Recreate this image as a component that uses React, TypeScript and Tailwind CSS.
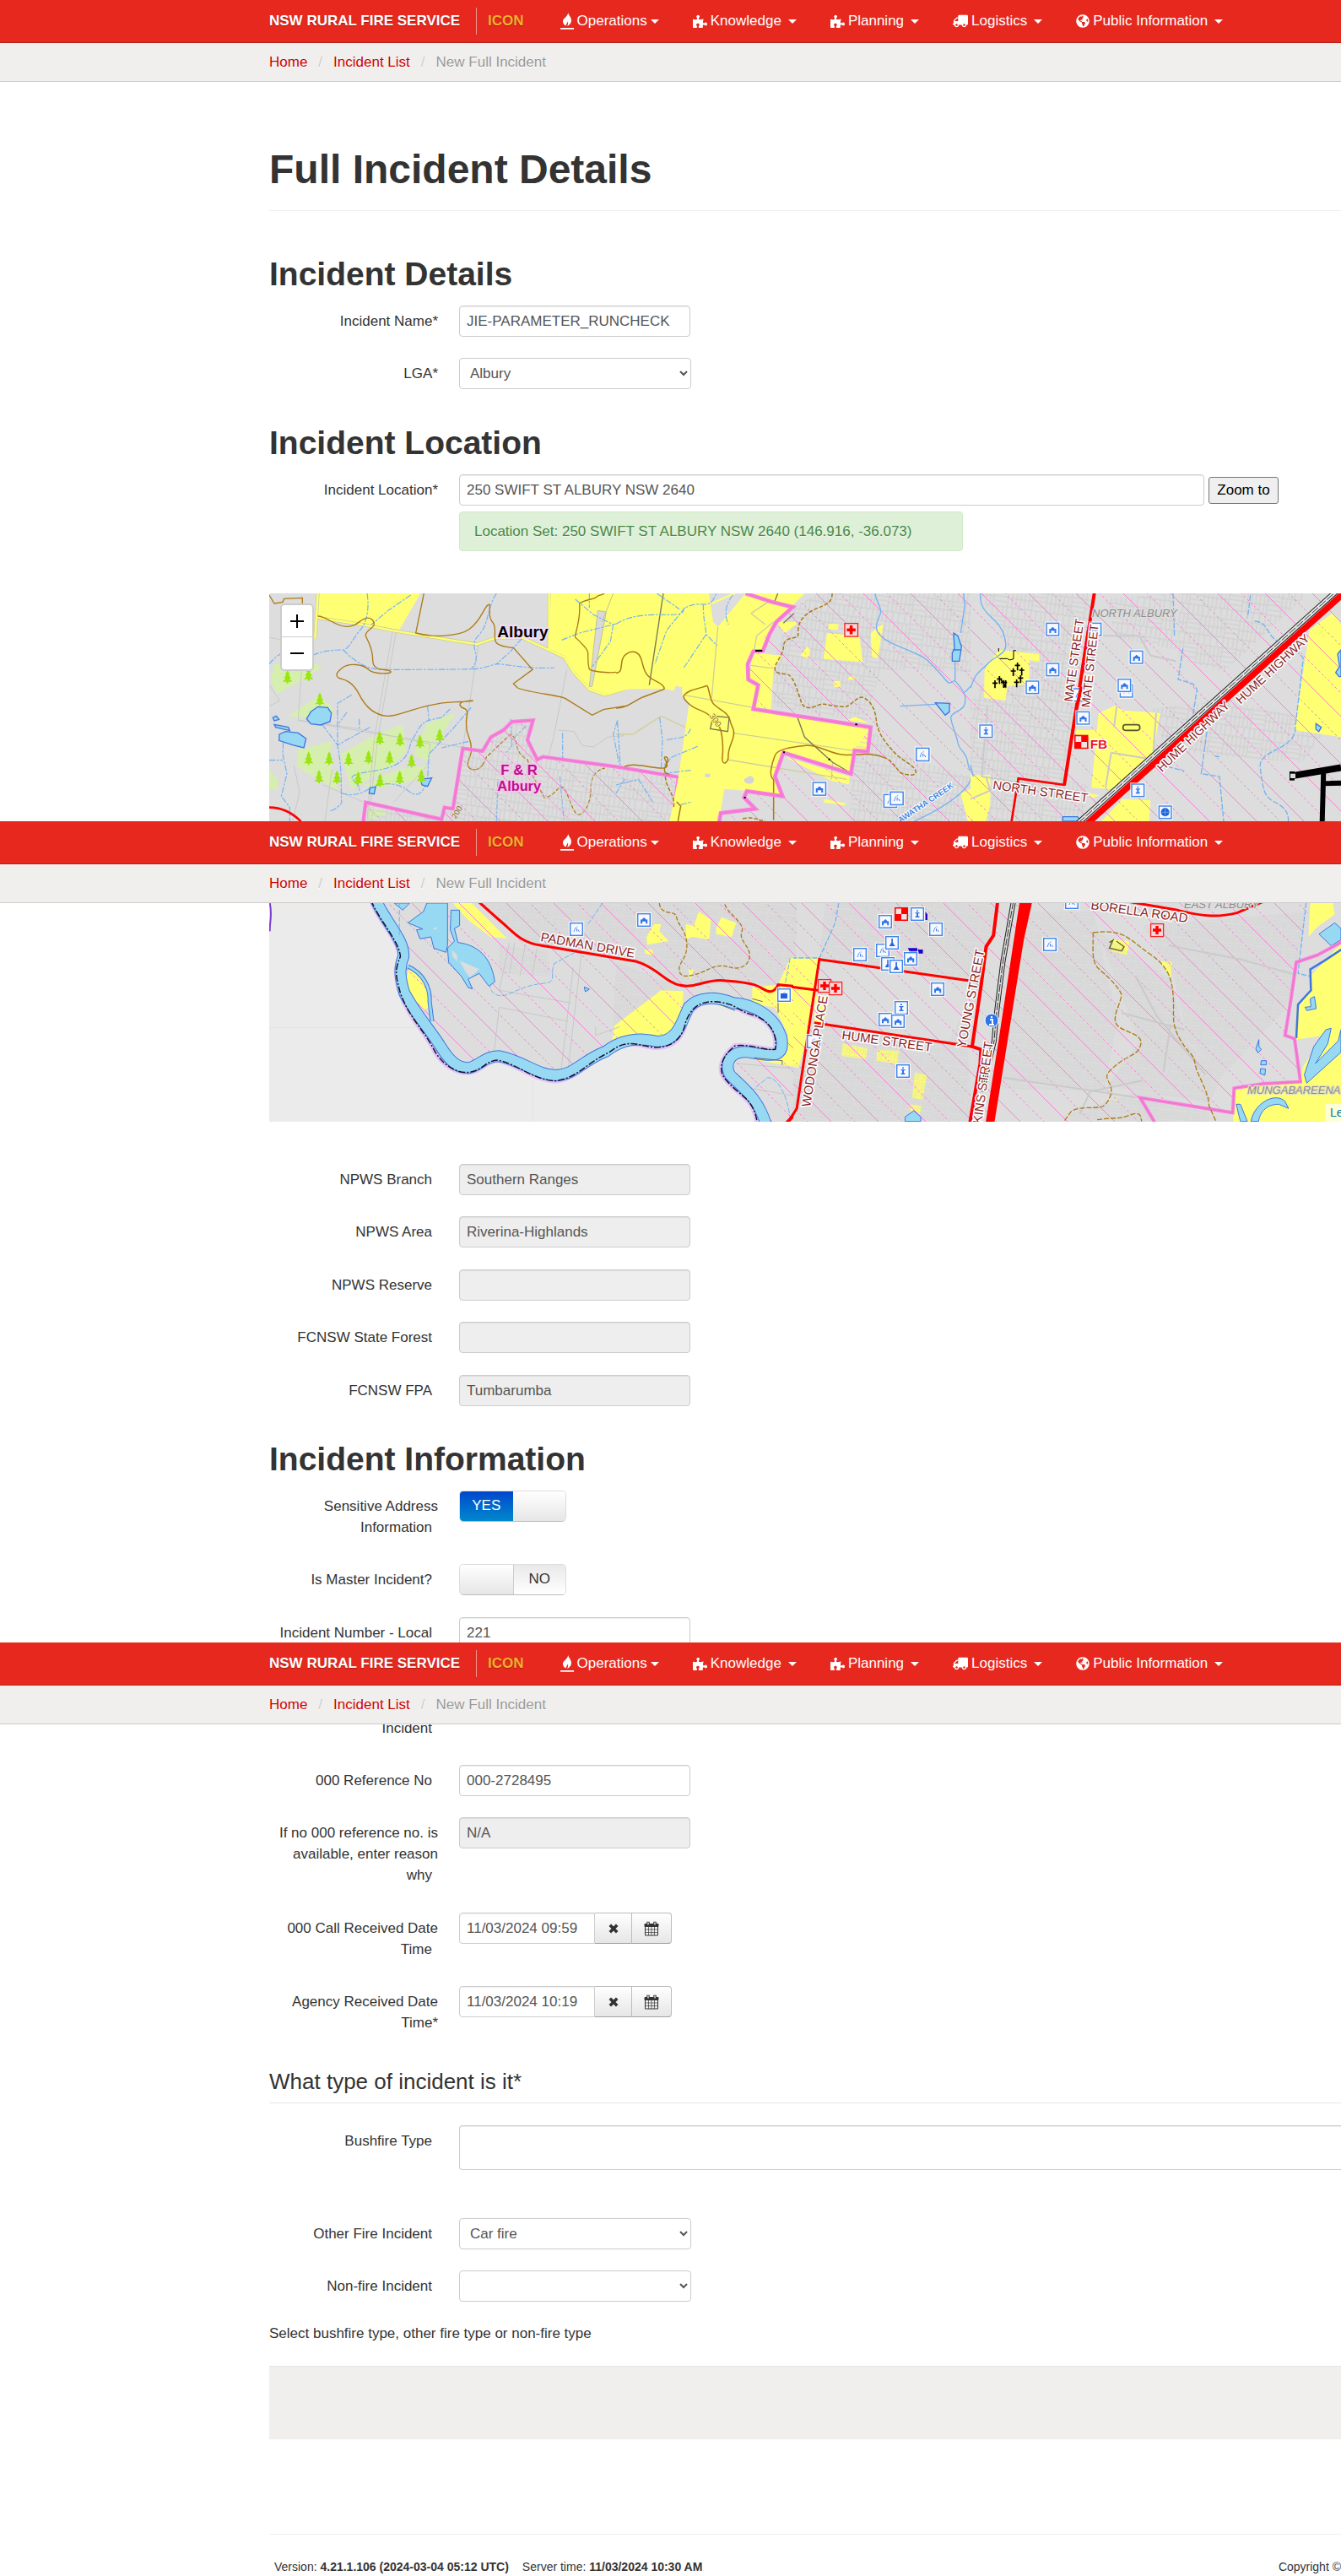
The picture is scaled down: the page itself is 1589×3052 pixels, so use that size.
import type { ReactNode } from "react";
import { FaGlobeAmericas, FaPuzzlePiece, FaTruck } from "react-icons/fa";

/* ---------- Icons ---------- */

function FlameIcon() {
  return (
    <svg viewBox="0 0 16 20" className="h-5 w-4" fill="currentColor" aria-hidden="true">
      <path d="M9.200 0C9.600 3 13 5 13 9.300c0 3.300-2 5.400-4.800 6.700.3-1.400 1.700-3.200.6-5.400-.4 1.500-1.900 2.500-2.300 5C4.500 14.600 3 12.800 3 10.200 3 6.500 8.600 5.200 9.200 0zM0 18h16v1.700H0z" />
    </svg>
  );
}

function CrossIcon() {
  return (
    <svg viewBox="0 0 12 12" className="h-3 w-3" aria-hidden="true">
      <path d="M1.800 1.800l8.400 8.400M10.200 1.800l-8.400 8.400" stroke="#333" strokeWidth="3.600" />
    </svg>
  );
}

function CalendarIcon() {
  return (
    <svg viewBox="0 0 18 18" className="h-[18px] w-[18px]" fill="none" stroke="#333" aria-hidden="true">
      <path d="M1 3.500h16v3H1z" fill="#333" />
      <path d="M1.500 3.500h15v13.500h-15z" />
      <path d="M1.500 10h15M1.500 13.500h15M5.500 6.500V17M9 6.500V17M12.500 6.500V17" strokeWidth="0.700" />
      <path d="M5 .8v4.200M13 .8v4.200" strokeWidth="3.400" />
      <path d="M5 1.500v3M13 1.500v3" stroke="#fff" strokeWidth="1.200" />
    </svg>
  );
}

/* ---------- Header ---------- */

const NAV: { label: string; icon: ReactNode; tight?: boolean }[] = [
  { label: "Operations", icon: <FlameIcon />, tight: true },
  { label: "Knowledge", icon: <FaPuzzlePiece size={17} /> },
  { label: "Planning", icon: <FaPuzzlePiece size={17} /> },
  { label: "Logistics", icon: <FaTruck size={18} className="-scale-x-100" /> },
  { label: "Public Information", icon: <FaGlobeAmericas size={16} /> },
];

function Header() {
  return (
    <header>
      <nav className="flex h-[51px] items-center border-b border-[#b02018] bg-[#e6281e] pl-[319px] text-[17px] whitespace-nowrap text-white [text-shadow:0_1px_1px_rgba(0,0,0,0.3)]">
        <a href="#home" className="font-bold">NSW RURAL FIRE SERVICE</a>
        <span className="mr-[13px] ml-[19px] h-8 w-px bg-[#f2938e]" />
        <a href="#icon" className="font-bold text-[#f6ae2d]">ICON</a>
        <ul className="ml-[43px] flex gap-[40px]">
          {NAV.map((n) => (
            <li key={n.label}>
              <button type="button" className="flex items-center gap-1">
                {n.icon}
                <span>{n.label}</span>
                <span
                  className={
                    (n.tight ? "" : "ml-[4px] ") +
                    "border-x-[5px] border-t-[5px] border-x-transparent border-t-white"
                  }
                />
              </button>
            </li>
          ))}
        </ul>
      </nav>
      <ol className="flex h-[46px] items-start border-b border-[#ccc] bg-[#f0efed] pt-[10px] pl-[319px] text-[17px] leading-[25px] [text-shadow:0_1px_0_#fff]">
        <li><a href="#home" className="text-[#c00]">Home</a></li>
        <li className="px-[13px] text-[#ccc]">/</li>
        <li><a href="#incidents" className="text-[#c00]">Incident List</a></li>
        <li className="px-[13px] text-[#ccc]">/</li>
        <li className="text-[#999]">New Full Incident</li>
      </ol>
    </header>
  );
}

/* ---------- Form parts ---------- */

const FIELD =
  "block h-[37px] rounded-[4px] border border-[#ccc] px-[8px] text-[17px] text-[#555] shadow-[inset_0_1px_1px_rgba(0,0,0,0.075)]";

function Row({ id, label, children }: { id: string; label: string; children: ReactNode }) {
  return (
    <div className="mb-[25px] grid grid-cols-[200px_minmax(0,1fr)] gap-[25px] last:mb-0 even:mb-[26px] even:last:mb-0">
      <label htmlFor={id} className="py-[6px] text-right text-[17px] leading-[25px] text-[#333]">
        {label}
        {!label.endsWith("*") && <span className="inline-block w-[7px]" />}
      </label>
      <div>{children}</div>
    </div>
  );
}

function TextField({ id, label, value, disabled }: { id: string; label: string; value: string; disabled?: boolean }) {
  return (
    <Row id={id} label={label}>
      <input
        id={id}
        defaultValue={value}
        disabled={disabled}
        className={FIELD + " w-[274px] bg-white disabled:bg-[#eee]"}
      />
    </Row>
  );
}

function SelectField({ id, label, value }: { id: string; label: string; value: string }) {
  return (
    <Row id={id} label={label}>
      <select
        id={id}
        defaultValue={value}
        className="block h-[37px] w-[275px] rounded-[4px] border border-[#ccc] bg-white px-2 text-[17px] text-[#555]"
      >
        <option>{value}</option>
      </select>
    </Row>
  );
}

function SwitchField({ id, label, on }: { id: string; label: string; on: boolean }) {
  return (
    <Row id={id} label={label}>
      <button
        id={id}
        type="button"
        role="switch"
        aria-checked={on}
        className="flex h-[37px] w-[127px] overflow-hidden rounded-[5px] border border-[#ddd] border-b-[#bbb] text-[17px] leading-[34px]"
      >
        {on ? (
          <>
            <span className="h-full w-1/2 bg-linear-to-b from-[#04c] to-[#08c] text-white">YES</span>
            <span className="h-full w-1/2 bg-linear-to-b from-white to-[#e6e6e6]" />
          </>
        ) : (
          <>
            <span className="h-full w-1/2 bg-linear-to-b from-white to-[#e6e6e6]" />
            <span className="h-full w-1/2 border-l border-[#ccc] bg-linear-to-b from-[#e9e9e9] to-white text-[#333]">NO</span>
          </>
        )}
      </button>
    </Row>
  );
}

function DateField({ id, label, value }: { id: string; label: string; value: string }) {
  const btn =
    "flex h-[37px] items-center justify-center border border-l-0 border-[#bbb] border-b-[#a2a2a2] bg-linear-to-b from-white to-[#e6e6e6]";
  return (
    <Row id={id} label={label}>
      <div className="flex">
        <input
          id={id}
          defaultValue={value}
          className="h-[37px] w-[161px] rounded-l-[4px] border border-[#ccc] px-2 text-[17px] text-[#555] shadow-[inset_0_1px_1px_rgba(0,0,0,0.075)]"
        />
        <button type="button" aria-label="Clear" className={btn + " w-[44px]"}><CrossIcon /></button>
        <button type="button" aria-label="Pick date" className={btn + " w-[47px] rounded-r-[4px]"}><CalendarIcon /></button>
      </div>
    </Row>
  );
}

function Heading({ children }: { children: ReactNode }) {
  return <h2 className="mb-3 text-[39px] leading-[50px] font-bold text-[#333]">{children}</h2>;
}

/* ---------- Map ---------- */

const YELLOW = "#ffff73";
const PINK = "#fb7fdc";

function Patterns({ id, k }: { id: string; k: number }) {
  return (
    <defs>
      <pattern id={id + "-hatch"} width="56" height="56" patternUnits="userSpaceOnUse" patternTransform={`scale(${k})`}>
        <path d="M-1-1l58 58" stroke="#f680d6" strokeWidth="1" fill="none" />
        <path d="M27-1l30 30M-1 27l30 30" stroke="#f680d6" strokeWidth="1" strokeDasharray="3 3" fill="none" />
      </pattern>
      <pattern id={id + "-lots"} width="46" height="34" patternUnits="userSpaceOnUse" patternTransform={`rotate(8) scale(${k})`}>
        <path
          d="M0 1h46M0 12h30M30 23h16M0 23h30M1 0v34M30 1v33M6 1v22M11 1v22M16 1v22M21 1v22M26 1v22M30 6h16M30 11h16M30 17h16M36 23v11M42 23v11M8 23v11M15 23v11M23 23v11"
          stroke="#cbcbcb"
          strokeWidth="0.900"
          fill="none"
        />
      </pattern>
    </defs>
  );
}

type Kind = "school" | "person" | "plain" | "tower";

function Facility({ x, y, kind, s = 1 }: { x: number; y: number; kind: Kind; s?: number }) {
  const glyph: Record<Kind, ReactNode> = {
    school: <path d="M4 12.300V7.500h1.500l2.600-2.500 2.600 2.500h1.500v4.800h-2V9.700H6v2.600z" fill="#2f74e8" />,
    person: <path d="M7 3.500h2V5H7zM5.500 6h5v1.200H9v3.300h1.500V12h-5v-1.500H7V7.200H5.500z" fill="#2f74e8" />,
    plain: <path d="M5 11c1.500-4 2-5 2.600-5.500M8.500 7v3.500M10 8.500l1.500 2.500M9 4.500v1" stroke="#2f74e8" fill="none" strokeWidth="0.900" />,
    tower: <path d="M7.300 3h1.600v5.500h1v2h1.500V12H5v-1.500h1.300v-2h1z" fill="#1f62dc" />,
  };
  return (
    <g transform={`translate(${x} ${y}) scale(${s})`}>
      <rect x="-1.200" y="-1.200" width="18.400" height="18.400" fill="#fff" opacity="0.700" />
      <rect x="0.700" y="0.700" width="14.600" height="14.600" fill="#f7f9ff" stroke="#3f85ea" strokeWidth="1.400" />
      {glyph[kind]}
    </g>
  );
}

function Hospital({ x, y, s = 1 }: { x: number; y: number; s?: number }) {
  return (
    <g transform={`translate(${x} ${y}) scale(${s})`}>
      <rect x="0.600" y="0.600" width="15" height="15" fill="#f0dcdc" stroke="#f22" strokeWidth="1.300" />
      <path d="M6.300 3h3.400v3.300H13v3.400H9.700V13H6.300V9.700H3V6.300h3.300z" fill="#f00" />
    </g>
  );
}

function Station({ x, y, s = 1 }: { x: number; y: number; s?: number }) {
  return (
    <g transform={`translate(${x} ${y}) scale(${s})`}>
      <rect width="16" height="16" fill="#f00" />
      <path d="M1.500 1.500H8V8H1.500zM8 8h6.500v6.500H8z" fill="#f3e4e4" />
    </g>
  );
}

function Label({
  x, y, size, angle = 0, fill = "#8b1f1f", halo = "#fff", bold, italic, children,
}: {
  x: number; y: number; size: number; angle?: number; fill?: string; halo?: string;
  bold?: boolean; italic?: boolean; children: string;
}) {
  return (
    <text
      transform={`translate(${x} ${y}) rotate(${angle})`}
      fontSize={size}
      fill={fill}
      stroke={halo}
      strokeWidth={size / 5}
      strokeLinejoin="round"
      paintOrder="stroke"
      fontWeight={bold ? 700 : 400}
      fontStyle={italic ? "italic" : "normal"}
    >
      {children}
    </text>
  );
}

const TREES: [number, number][] = [
  [92, 335], [207, 415], [167, 625], [309, 627], [455, 622], [420, 552], [492, 557],
  [343, 695], [421, 703], [491, 693], [204, 690], [380, 620], [240, 625], [167, 326],
  [633, 543], [563, 565], [533, 634], [268, 692], [568, 688],
];

function MapNorth() {
  const boundary1 =
    "M360 860L370 782 640 842 650 800 680 805 715 590 785 600 815 550 860 525 890 495 965 490 945 560 980 630 1000 620 1260 655 1482 692 1458 860";
  const boundary2 =
    "M460 39L555 70 628 88 570 140 545 185 522 243 488 245 468 290 470 345 505 365 488 450 905 515 895 602 848 597 835 680 595 605 565 690 592 760 465 742 455 765 495 805 372 820 365 860";
  return (
    <svg
      viewBox="0 0 3810 810"
      preserveAspectRatio="xMinYMin slice"
      className="block h-[270px] w-full bg-[#ddd] font-['Liberation_Sans',Arial,sans-serif]"
      fill="none"
      role="img"
      aria-label="Map of Albury, northern part"
    >
      <Patterns id="north" k={3} />
      <g transform="translate(-27 -39)">
        <path d="M205 39H565L490 168 200 125z" fill={YELLOW} />
        <path d="M45 290L180 285 215 300 150 345 55 395 32 350zM95 475L200 405 250 440 255 470 160 482zM130 595L250 565 240 620 270 740 125 655zM280 610L400 545 500 505 515 600 470 650 320 735zM365 720L480 665 590 650 560 700 400 735zM540 610L590 500 690 465 620 570 590 640zM27 665L55 700V735H27zM375 800L455 820 380 845z" fill="#d7efae" />
        <g stroke="#c9c9c9" strokeWidth="3">
          <path d="M150 200L130 490 390 535 740 590M465 175L400 560 375 840M478 175L412 560 388 780M770 225L715 590M1085 310L1040 540 1020 620M115 650L135 745 110 849M250 665L225 849M130 490L340 520 600 575 590 650 470 780M220 720L360 780M1055 525L1110 530 1140 580 1180 585 1230 550 1290 545M27 195L70 205M27 365L65 420 27 440" />
        </g>
        <path d="M200 39L190 200M1022 39V240M195 125L360 150 470 172 765 220 830 198 930 198 1020 240 1075 265 1110 320 1165 380 1220 400 1290 380" stroke="#cfcf9a" strokeWidth="12" />
        <path d="M200 39L190 200M1022 39V240M195 125L360 150 470 172 765 220 830 198 930 198 1020 240 1075 265 1110 320 1165 380 1220 400 1290 380" stroke={YELLOW} strokeWidth="7" />
        <path d="M1028 39H1300V380L1220 396 1167 376 1112 316 1077 261 1022 236z" fill={YELLOW} />
        <path d="M1195 100L1225 105 1175 370 1165 370zM1250 39L1210 140" fill="#d9d9d9" stroke="#c4c48a" strokeWidth="3" />
        <g stroke="#72b2f5" strokeWidth="3.500" strokeDasharray="22 5 8 5">
          <path d="M375 39C385 100 370 150 350 170S310 240 290 240 220 240 180 260M530 45L450 100 390 150M290 240C340 290 380 310 430 310S700 310 750 308 820 290 840 290 960 310 1040 303M835 39C800 90 810 150 770 190S790 260 745 308M925 200L880 250 835 290M1165 39V90M1115 60L1180 115 1250 150 1290 140M1250 150L1240 210 1175 300M1067 205L1130 180 1250 150M27 290C60 250 90 240 130 240" />
          <path d="M320 400L270 430V580C290 680 280 780 285 780S260 815 240 812M215 505L270 578 390 512M303 462L275 500M347 485V525M77 570L75 610 90 680 70 760 100 800V849M27 632H75M590 440L595 490C560 500 550 540 535 560S540 650 400 670 350 700 348 740M745 445L680 520 595 610 590 700M670 450L640 480 595 490M285 750C340 765 370 740 390 730S470 700 520 740 580 720 590 700M885 485L890 580 870 605M940 510L885 565M1070 535V630M835 849L840 700M1265 490L1250 540 1270 640M1060 690L1075 849M735 565L640 588" />
        </g>
        <g stroke="#ad7a17" strokeWidth="4">
          <path d="M27 45L45 75 75 70 80 58 145 55V115M200 120C230 120 260 155 300 157S350 130 372 127 400 140 400 150 365 175 370 190 395 230 395 275 440 305 457 315 400 330 380 310 310 285 285 305 265 335 275 340 320 345 345 395 400 470 445 475 560 430 690 425 700 415 705 435 735 440 730 470 725 520 735 545 745 580 745 600 725 640 735 655 770 670 785 650M577 39L548 180C600 195 700 195 740 165S790 90 805 80 800 120 820 140 820 200 835 215 895 232 895 232L963 310 895 360 910 375C960 395 1060 400 1080 413L1175 472 1215 452 1290 440M1130 75C1150 60 1185 60 1190 52S1215 45 1218 39M1130 75C1135 140 1110 190 1115 195S1160 235 1160 250 1162 300 1165 308 1270 330 1275 310 1275 270 1290 260" />
          <path d="M785 650L800 620 885 540C920 560 890 600 945 630L965 690 1005 765C1050 760 1060 700 1080 740S1110 830 1130 825 1170 780 1170 740 1180 670 1220 660" strokeDasharray="14 6" />
        </g>
        <g fill="#97d9f2" stroke="#3f75e0" strokeWidth="4">
          <path d="M175 460L200 442 235 445 248 465 243 495 210 507 175 503 160 485zM63 540L85 530 130 535 158 555 150 588 110 578 62 562zM40 480L52 475 62 487 45 492zM45 505L95 515 100 527 50 515zM565 700L605 695 590 725 570 720zM385 730L405 728 400 752 382 750z" />
        </g>
        <g fill="#9be512">
          {TREES.map(([x, y]) => (
            <path key={x + "-" + y} transform={`translate(${x} ${y})`} d="M0-24l8 16H4l9 14H6l11 12H3v6h-6v-6h-14l11-12h-7l9-14h-4z" />
          ))}
        </g>
        <path d={boundary1 + "z"} fill="url(#north-lots)" />
        <path d={boundary1 + "z"} fill="url(#north-hatch)" />
        <path d={boundary1} stroke={PINK} strokeWidth="13" />
        <path d={boundary1} stroke="#d46cba" strokeWidth="1.500" />
        <path d="M27 800C70 800 110 820 140 850" stroke="#f00" strokeWidth="8" />
        <Label x={838} y={195} size={57} bold fill="#000" halo="#f3dcfa">Albury</Label>
        <Label x={850} y={685} size={50} bold fill="#b5138f" halo="#ffc0ea">F &amp; R</Label>
        <Label x={838} y={742} size={49} bold fill="#b5138f" halo="#ffc0ea">Albury</Label>
        <Label x={690} y={842} size={28} angle={-58} fill="#8a7040" halo="#ddd">200</Label>
      </g>

      <g transform="translate(1233 -39)">
        <path d="M0 39H330L345 140 362 158 460 39H670L570 140 545 185 520 245 488 245 468 290 470 345 505 365 488 450 905 515 895 600 845 600 835 680 595 605 565 690 590 760 465 740 385 735 365 849H190L222 690 260 430 235 400 235 372 212 368 205 385 170 378 0 380z" fill={YELLOW} />
        <path d="M625 90L700 39H1290V860H365L372 820 495 805 455 765 465 742 592 760 565 690 595 605 835 680 848 597 895 602 905 515 488 450 505 365 470 345 468 290 488 245 522 243 570 140z" fill="#ddd" />
        <path d="M640 80L720 39H1290V320L940 310 890 500 560 440 560 290 590 180zM840 600L905 520 1000 610 1290 700V860H830L835 680z" fill="url(#north-lots)" />
        <path d="M750 180L865 190 877 283 737 272zM755 148H790V168H755zM905 180L950 147 930 270 910 265zM655 260L680 228 690 240 685 270zM485 250L590 260 560 310 550 450 490 445 505 365 475 340zM775 350H797V372H775zM820 345L840 330 852 345zM600 608L835 600 820 670zM600 620L830 690 828 718 765 705zM740 770L815 785V793L740 782zM820 490L850 478 900 500zM1225 750L1290 720V849H1250zM570 140H640V150L600 180zM1265 685H1290V720H1265z" fill={YELLOW} />
        <path d="M628 88L700 39H1290V860H365L372 820 495 805 455 765 465 742 592 760 565 690 595 605 835 680 848 597 905 515 488 450 505 365 470 345 468 290 488 245 570 140z" fill="url(#north-hatch)" />
        <g stroke="#cfcf9a" strokeWidth="4">
          <path d="M362 158L340 410M240 400L490 445M415 535L890 605M395 630L820 700M480 110L540 70 620 90M480 110L530 150M490 245L500 190 560 140M480 295L550 305M770 640L765 700M160 475L60 540H0M160 475L245 515" />
        </g>
        <path d="M455 700a18 14 0 1 0 20-12zM316 680h18v12h-18z" fill="#d4d4d4" />
        <path d="M340 75L440 30" stroke={YELLOW} strokeWidth="6" />
        <path d="M168 39L118 365M645 480L670 550 770 640 830 675M335 520L345 475 402 480 397 530zM575 39L563 70M595 145L632 110" stroke="#777755" strokeWidth="4" />
        <g stroke="#72b2f5" strokeWidth="3.500" strokeDasharray="22 5 8 5">
          <path d="M0 148C60 110 130 115 195 115S230 95 245 90 270 75 310 78 350 40 360 39M145 39L225 95M245 90L180 170 138 290M310 78C310 140 320 160 320 185L360 225M320 185L240 305M415 45C380 90 390 130 400 150M5 495L15 650M155 480L165 560 160 670M180 560C220 550 250 560 265 520M290 583L200 620 170 650M165 680L265 668M0 750L30 700M0 720L80 700 130 780M230 790L270 780" />
        </g>
        <path d="M920 39C930 80 945 90 940 110S900 170 960 205 1080 250 1110 280 1150 320 1170 345 1190 350 1205 350L1205 180M1240 80L1235 39M1240 80L1225 180M1205 350C1240 390 1245 400 1240 430S1190 460 1190 480 1210 540 1215 570 1245 600 1250 640 1270 660 1260 700 1170 800 1060 849M1240 390L1270 360C1280 330 1275 320 1290 318M1010 440L1190 430" stroke="#72b2f5" strokeWidth="4" />
        <path d="M1200 180L1215 190 1228 230 1220 280H1195L1195 250 1203 235zM1135 428L1185 430V460L1170 472zM1197 240H1225" fill="#97d9f2" stroke="#3f75e0" strokeWidth="4" />
        <g stroke="#ad7a17" strokeWidth="4.500">
          <path d="M0 322C30 320 10 280 30 260S80 240 90 275 100 330 140 350 170 380 170 380L90 410C60 425 40 445 0 447M240 405C250 380 310 375 320 368S330 410 345 430 400 460 405 490 430 520 410 570 405 620 395 635 375 640 378 620 380 530 365 510 340 470 300 455 240 415 240 405M30 655C60 640 100 655 155 660S160 620 175 620 180 640 185 635 150 680 190 682M560 845L560 700C540 690 555 640 565 615S630 585 675 580 760 610 810 613 900 600 960 625M215 780L230 795 220 849" />
          <path d="M768 39C770 90 710 80 670 120S660 190 640 195 595 200 595 230 560 290 565 310 600 320 615 330 640 370 650 400 660 440 680 445 720 430 740 433 800 445 820 440 860 400 880 410 920 440 925 490 960 570 985 600 1060 650 1065 670 1040 685 1020 680 990 640 960 625M450 840C500 830 500 850 530 845M175 690C180 740 210 750 205 800" strokeDasharray="14 6" />
        </g>
        <path d={boundary2} stroke={PINK} strokeWidth="14" />
        <path d={boundary2} stroke="#d46cba" strokeWidth="1.500" />
        <path d="M495 243h25M455 765h6M850 505h8M594 604h6M755 629h6" stroke="#000" strokeWidth="6" />
        <Label x={330} y={475} size={30} angle={55} fill="#8a7040" halo={YELLOW}>300</Label>
        <Hospital x={811} y={144} s={3.1} />
        <Facility x={1065} y={587} s={3.1} kind="plain" />
        <Facility x={698} y={709} s={3.1} kind="school" />
        <Facility x={950} y={752} s={3.1} kind="plain" />
        <Facility x={973} y={743} s={3.1} kind="plain" />
        <Label x={1010} y={856} size={29} angle={-34} bold fill="#4a86dc">AWATHA CREEK</Label>
      </g>

      <g transform="translate(2493 -39)">
        <path d="M0 39H1317V849H0z" fill="#ddd" />
        <path d="M30 39H430L400 200 330 700 420 720 400 849H0V430L130 220zM480 60L720 39 740 240 520 200zM640 450L900 420 1280 500 1180 640 700 600zM740 39H1200L900 320 740 270z" fill="url(#north-lots)" />
        <path d="M100 240L245 255 245 283 210 275 208 360 130 370 125 420 48 410 50 310zM455 465L515 437 545 455 675 465 645 625 500 735 430 730zM375 525H450V560H375zM1285 110L1300 120 1317 150V550L1152 525 1205 170zM465 849L540 770 640 775 635 849zM0 685H70V790L55 849H0zM420 750L460 757 430 767z" fill={YELLOW} />
        <path d="M0 39H1317V849H0z" fill="url(#north-hatch)" />
        <path d="M0 770L70 740 55 690M500 605L620 625M500 605L480 730M520 440L510 515M660 465L650 600M470 190H600L640 260 730 280M60 440L40 690 230 720" stroke="#cacaca" strokeWidth="6" />
        <path d="M35 39C30 120 100 120 120 190S100 250 60 290 20 320 0 375M0 650L10 690" stroke="#72b2f5" strokeWidth="4" />
        <path d="M720 39L725 190M755 235L738 345 790 360 805 380 790 480 840 530 820 680 885 690 900 849M995 45L985 125M1010 138C1060 140 1050 190 1100 215S1170 250 1183 270L1155 510C1160 600 1020 590 1030 660S1040 760 1080 780 1130 820 1130 849M700 655L760 670M870 618L885 620" stroke="#72b2f5" strokeWidth="4" strokeDasharray="20 6" />
        <path d="M1317 240L1305 255 1312 300 1298 320 1310 335H1317zM1228 502L1247 515 1238 530 1228 522zM328 849V833H380L395 849z" fill="#97d9f2" stroke="#3f75e0" strokeWidth="4" />
        <path d="M383 855L1300 32" stroke="#222" strokeWidth="20" />
        <path d="M383 855L1300 32" stroke="#e4e4e4" strokeWidth="14" />
        <path d="M383 855L1300 32" stroke="#333" strokeWidth="3" strokeDasharray="30 6" />
        <path d="M410 862L1325 40" stroke="#f00" strokeWidth="22" />
        <path d="M440 39L333 722" stroke="#f00" strokeWidth="12" />
        <path d="M335 720L170 697 145 855" stroke="#f00" strokeWidth="8" />
        <g stroke="#000">
          <path d="M1140 688L1317 658" strokeWidth="24" />
          <path d="M1255 670L1250 855M1255 715L1317 713" strokeWidth="18" />
          <path d="M1143 672v32" strokeWidth="18" />
        </g>
        <path d="M1137 680h18v16h-18z" fill="#ddd" />
        <path d="M1266 690l12 16h-12z" fill="#ddd" />
        <g stroke="#000" strokeWidth="5">
          <path d="M167 285v28M158 295h18M182 303v28M173 312h18M152 305v28M143 315h18M178 330v28M169 340h18M164 345v28M155 355h18M103 333v28M94 343h18M87 348v28M78 358h18M118 347v28M108 356h22M108 345l18 28M125 348v26" />
          <path d="M103 271h28l8 5 14-4v-30h8M100 234v12" strokeWidth="3" />
        </g>
        <rect x="542" y="506" width="60" height="20" rx="9" stroke="#55552a" strokeWidth="5" />
        <Facility x={268} y={143} s={3} kind="school" />
        <Facility x={268} y={286} s={3} kind="school" />
        <Facility x={196} y={349} s={3} kind="school" />
        <Facility x={418} y={143} s={3} kind="plain" />
        <Facility x={360} y={376} s={3} kind="plain" />
        <Facility x={566} y={242} s={3} kind="school" />
        <Facility x={530} y={362} s={3} kind="plain" />
        <Facility x={523} y={342} s={3} kind="school" />
        <Facility x={376} y={458} s={3} kind="school" />
        <Facility x={31} y={505} s={3} kind="person" />
        <Facility x={571} y={715} s={3} kind="person" />
        <Facility x={668} y={793} s={3} kind="plain" />
        <circle cx="692" cy="817" r="15" fill="#1f62dc" />
        <path d="M679 817h26M692 804v26" stroke="#8db6f5" strokeWidth="2" />
        <path d="M424 143L397 320M376 452L394 370" stroke="#f00" strokeWidth="12" />
        <Station x={369} y={542} s={3.1} />
        <Label x={425} y={590} size={46} bold fill="#f0141e">FB</Label>
        <Label x={432} y={122} size={39} italic fill="#8c8c8c" halo="#ddd">NORTH ALBURY</Label>
        <Label x={362} y={426} size={43} angle={-82}>MATE STREET</Label>
        <Label x={424} y={446} size={43} angle={-84}>MATE STREET</Label>
        <Label x={680} y={676} size={43} angle={-44}>HUME HIGHWAY</Label>
        <Label x={960} y={434} size={43} angle={-43}>HUME HIGHWAY</Label>
        <Label x={78} y={734} size={44} angle={8}>NORTH STREET</Label>
      </g>
    </svg>
  );
}

const RIVER =
  "M332 20C362 100 415 160 412 220C398 260 402 300 415 350C450 430 490 480 520 540C545 590 570 620 605 615C640 600 650 575 690 574C760 590 800 642 855 642C910 640 930 590 1000 557C1050 510 1100 508 1150 522C1210 520 1220 450 1240 400C1270 360 1320 362 1370 385C1430 390 1490 430 1510 510C1520 580 1480 575 1430 563C1370 545 1340 590 1360 640C1400 690 1440 720 1465 816";
const STATE_LINE =
  "M318 20C340 90 400 165 403 220C385 270 390 290 403 350C430 440 470 480 498 545C520 600 560 632 595 632C640 630 650 590 685 588C740 600 790 660 855 662C920 650 940 600 1010 560C1060 510 1090 535 1140 543C1200 545 1225 500 1232 450C1250 400 1270 382 1310 380C1380 385 1370 405 1420 425C1470 440 1500 490 1492 550C1460 555 1420 530 1375 537C1330 580 1325 630 1350 660C1390 720 1430 720 1440 816";
const EAST_LINE =
  "M1575 165L1500 215 1440 240 1425 370 1408 500 1435 512 1452 665 1345 672 1262 688 1258 775 993 722 1038 816";

function MapSouth() {
  const v = { vectorEffect: "non-scaling-stroke" } as const;
  return (
    <svg
      viewBox="0 0 1270 259"
      preserveAspectRatio="xMinYMin slice"
      className="block h-[259px] w-full bg-[#ebebeb] font-['Liberation_Sans',Arial,sans-serif]"
      fill="none"
      role="img"
      aria-label="Map of Albury, southern part"
    >
      <Patterns id="south" k={1} />
      <g transform="translate(-9 -10) scale(0.408 0.3333)">
        <path d={RIVER + "L1580 816V20z"} fill="#ddd" />
        <path d="M640 30H1568V330L1440 315 1200 320 1100 235 780 175zM1030 240L1200 320 1220 350 1020 470zM690 180L830 200 840 290 690 280z" fill="url(#south-lots)" />
        <path d="M430 255L460 275 490 330 485 400 470 412 430 370 418 310zM555 30H610L712 155 665 150 600 90zM1018 520L1025 465 1160 340 1225 343 1222 400 1190 500 1090 505zM1232 105L1255 110 1270 60 1305 90 1300 160 1250 150 1232 160zM1320 120L1335 80 1378 100 1365 150 1320 140zM1118 150L1140 105H1160L1155 130 1182 165 1120 178zM1112 195L1135 195 1138 215 1115 210zM1240 265H1255L1245 305zM1535 225L1568 222V615L1420 585 1500 590 1530 500 1490 400 1425 390V330L1500 320z" fill={YELLOW} />
        <g stroke="#c8c8c8">
          <path {...v} d="M905 260L870 620M930 200L890 620M690 400L890 450M690 400L675 560M720 170L690 340 900 385M735 170L720 280M765 180L750 290M800 190L785 295M1380 600L1568 620M1430 690L1568 720M970 470V500L1040 470" />
        </g>
      </g>
      <path
        transform="translate(-9 -10)"
        d="M135 7C148 33 169 53 168 73C162 87 164 100 169 117C184 143 200 160 212 180C222 197 233 207 247 205C261 200 265 192 282 191C310 197 326 214 349 214C371 213 379 197 408 186C428 170 449 169 469 174C494 173 498 150 506 133C518 120 539 121 559 128C583 130 608 143 616 170C620 193 604 192 583 188C559 182 547 197 555 213C571 230 588 240 598 272L645 272V7z"
        fill="url(#south-hatch)"
      />
      <g transform="translate(-9 -10) scale(0.408 0.3333)">
        <path {...v} d="M22 472H500M787 660V806" stroke="#e2e2e2" />
        <path {...v} d={STATE_LINE} stroke="#dfc4f4" strokeWidth="6" />
        <path {...v} d={RIVER} stroke="#3f75e0" strokeWidth="14" />
        <path {...v} d={RIVER} stroke="#97d9f2" strokeWidth="12" />
        <path {...v} d={STATE_LINE} stroke="#1c1030" strokeWidth="1.500" strokeDasharray="8 2 2 2" />
        <path {...v} d="M24 30C32 80 22 100 24 130" stroke="#7b3fd0" strokeWidth="2" />
        <path {...v} d="M425 255C470 280 490 330 488 380L495 450" stroke="#3f75e0" strokeWidth="5" />
        <path {...v} d="M425 255C470 280 490 330 488 380L495 450" stroke="#97d9f2" strokeWidth="3" />
        <g fill="#97d9f2" stroke="#3f75e0">
          <path {...v} d="M480 30H540V180L535 205 500 190 492 150 460 157 450 125 468 122 425 100 470 60zM385 30H430L410 55zM550 55H575V110L560 120 570 170C640 180 670 240 677 310L660 325 632 280 600 300 612 335 600 330 580 290 543 240 540 190 560 165 548 125zM937 328L952 336 940 345z" />
        </g>
        <path d="M575 235L632 265 605 295 590 270zM552 195L568 215V238L555 220zM497 120L508 115V125z" fill="#ddd" />
        <path {...v} d="M990 30L945 110M910 205L850 245C835 290 860 310 820 315S760 330 720 352 660 340 665 320M1535 225L1520 320M1535 800C1530 720 1500 650 1470 650L1430 690M400 30V150" stroke="#72b2f5" strokeDasharray="6 2" />
        <path {...v} d="M1155 30C1160 80 1200 50 1205 80S1235 130 1235 180 1210 240 1213 270 1250 290 1280 275 1320 245 1360 258 1420 240 1417 210 1385 160 1395 130 1345 60 1345 30" stroke="#ad7a17" strokeDasharray="5 2" strokeWidth="1.300" />
        <path {...v} d="M630 25L690 90C730 130 750 170 810 180L1090 238C1150 260 1170 310 1215 322S1290 300 1340 305 1400 310 1430 320 1480 370 1500 320L1568 328" stroke="#f00" strokeWidth="3" />
        <path {...v} d="M1575 630C1560 700 1575 760 1520 816" stroke="#f00" strokeWidth="4" />
        <path {...v} d="M1330 390L1375 412M1425 370L1455 380M1500 380V420M1430 580L1512 590V605" stroke="#667" />
      </g>

      <g transform="translate(621 -10) scale(0.4139 0.3333)">
        <path d="M10 20H1580V816H0z" fill="#ddd" />
        <path d="M0 225H75L50 460 15 615H0zM140 530L213 545 207 585 138 573zM240 550L302 555 298 602 238 590zM348 632L383 640 370 730 340 722zM335 745L368 750 360 790 335 775zM62 360H100L85 465H60zM908 160L962 165 955 215 910 200zM1050 238L1085 240 1080 293zM1480 30H1545L1550 70 1500 115 1475 150zM1480 290L1568 175V806H1260L1258 690 1450 665 1460 610 1520 500 1440 515 1440 410 1480 340zM920 725h8v6h-8z" fill={YELLOW} />
        <path d="M90 30H580L500 540 510 806H0V600L30 620 60 460 440 530 540 300 75 230zM650 60H860L900 300 930 440 890 700 600 690 590 500zM870 130L1080 300 1130 530 1230 640 1190 740 900 680 990 520zM1000 110L1470 60 1440 300 1400 420 1230 640 1130 520 1090 290zM790 780L990 700 1190 760V806H790z" fill="url(#south-lots)" />
      </g>
      <path transform="translate(621 -10)" d="M0 7H613L596 80 584 167 594 170 600 222 521 230 524 258 412 242 428 269H0z" fill="url(#south-hatch)" />
      <g transform="translate(621 -10) scale(0.4139 0.3333)">
        <path {...v} d="M130 30L120 100 75 225H0M1468 30L1445 280 1480 290" stroke="#72b2f5" strokeDasharray="6 2" strokeWidth="1.300" />
        <g stroke="#cacaca" strokeWidth="2">
          <path {...v} d="M1075 180L1280 230 1440 285M980 290L1040 430 1180 640M940 420L1120 480M1080 460L1060 630M600 650L980 720M820 780L850 700 1000 660" />
        </g>
        <g fill="#97d9f2" stroke="#3f75e0">
          <path {...v} d="M1505 140L1550 100 1568 120V160L1540 182zM1480 370L1492 362 1497 405 1470 412 1465 400 1482 398zM1333 515V540L1340 550 1330 562 1324 548zM1340 590H1354V605H1338zM1338 618L1352 620 1350 642 1336 635zM1310 806C1320 740 1380 700 1408 735L1418 760 1390 745C1350 745 1335 780 1332 806zM1268 745H1280L1300 806H1280zM320 790L345 768 365 790V806H320zM1463 640L1490 540 1525 480 1540 475 1530 530 1495 600 1560 520 1568 480V560L1470 670z" />
        </g>
        <path {...v} d="M1575 190L1520 235 1480 265 1482 340 1445 390 1440 510" stroke="#3f75e0" strokeWidth="2.500" />
        <path {...v} d={EAST_LINE} stroke={PINK} strokeWidth="4" />
        <path {...v} d={EAST_LINE} stroke="#d46cba" strokeWidth="0.600" />
        <path {...v} d="M858 135C950 120 960 160 1020 210S1085 310 1088 370 1080 460 1110 520 1145 560 1150 600 1190 700 1190 750L1210 806M858 135C860 200 850 240 880 270S930 330 938 350 910 430 925 460 1000 490 995 530 960 570 930 600 890 640 905 670 900 750 880 755 800 750 790 780L775 806M870 800C920 790 930 800 960 785S995 780 997 806" stroke="#ad7a17" strokeDasharray="6 2" strokeWidth="1.300" />
        <path {...v} d="M905 170L915 162 905 190 940 200 947 185 925 165" stroke="#66663a" strokeWidth="1.500" />
        <path {...v} d="M630 25L600 240 580 440 575 520 540 700" stroke="#222" strokeWidth="6" />
        <path {...v} d="M630 25L600 240 580 440 575 520 540 700" stroke="#ddd" strokeWidth="4" />
        <path {...v} d="M630 25L600 240 580 440 575 520 540 700" stroke="#333" strokeWidth="1" strokeDasharray="9 2" />
        <path d="M648 25H684L660 160 575 816H550L590 500z" fill="#f00" />
        <path {...v} d="M585 25L573 145 552 185 538 320 512 540 537 550 535 600 505 816" stroke="#f00" strokeWidth="4" />
        <path {...v} d="M-5 328L70 340M75 230L540 312M75 225L45 470 10 760-10 800M60 455L512 540" stroke="#f00" strokeWidth="3" />
        <path {...v} d="M960 25L1100 55C1180 80 1220 80 1270 65L1345 25" stroke="#f00" strokeWidth="3" />
        <path d="M328 190h27v18h-20zM357 195h14v14h-12zM378 60l6 10v20h-6z" fill="#20c" />
      </g>
      <Facility x={356} y={23} kind="plain" />
      <Facility x={436} y={12} kind="school" />
      <Facility x={602} y={101} kind="plain" />
      <path d="M606 107h8v6h-8z" fill="#1f62dc" />
      <Facility x={722} y={14} kind="school" />
      <Facility x={760} y={5} kind="person" />
      <Facility x={782} y={23} kind="plain" />
      <Facility x={692} y={53} kind="plain" />
      <Facility x={719} y={48} kind="plain" />
      <Facility x={725} y={64} kind="tower" />
      <Facility x={730} y={39} kind="tower" />
      <Facility x={752} y={58} kind="school" />
      <Facility x={735} y={67} kind="tower" />
      <Facility x={784} y={94} kind="school" />
      <Facility x={741} y={116} kind="person" />
      <Facility x={722} y={130} kind="school" />
      <Facility x={737} y={132} kind="school" />
      <Facility x={743} y={191} kind="person" />
      <Facility x={917} y={41} kind="plain" />
      <Facility x={943} y={-9} kind="plain" />
      <Facility x={637} y={156} kind="plain" />
      <circle cx="856" cy="139" r="8" fill="#2f74e8" stroke="#fff" />
      <path d="M856 134v2M854 138h3v6M853 144h6" stroke="#fff" strokeWidth="2" />
      <Station x={741} y={5} />
      <Hospital x={650} y={90} />
      <Hospital x={663} y={93} />
      <Hospital x={1044} y={24} />
      <path d="M1059 14h3v3h-3z" fill="#f00" />
      <Label x={321} y={45} size={15} angle={10}>PADMAN DRIVE</Label>
      <Label x={1084} y={6} size={13} italic fill="#8c8c8c" halo="#ddd">EAST ALBURY</Label>
      <Label x={973} y={7} size={15} angle={8}>BORELLA ROAD</Label>
      <Label x={641} y={242} size={15} angle={-81}>WODONGA PLACE</Label>
      <Label x={678} y={161} size={15} angle={8}>HUME STREET</Label>
      <Label x={825} y={172} size={15} angle={-79}>YOUNG STREET</Label>
      <Label x={844} y={262} size={15} angle={-82}>KINS STREET</Label>
      <Label x={1159} y={226} size={13} italic fill="#8c8c8c" halo="#e4e4c0">MUNGABAREENA</Label>
    </svg>
  );
}

/* ---------- Page ---------- */

export default function App() {
  return (
    <div className="overflow-x-hidden bg-white font-['Liberation_Sans',Arial,sans-serif] text-[#333]">
      <section>
        <Header />
        <div className="pt-[79px] pl-[319px]">
          <h1 className="border-b border-[#eee] pb-[23px] text-[48px] leading-[50px] font-bold">Full Incident Details</h1>
          <div className="mt-[50px]">
            <Heading>Incident Details</Heading>
            <div>
              <TextField id="incident-name" label="Incident Name*" value="JIE-PARAMETER_RUNCHECK" />
              <SelectField id="lga" label="LGA*" value="Albury" />
            </div>
          </div>
          <div className="mt-[39px]">
            <Heading>Incident Location</Heading>
            <Row id="incident-location" label="Incident Location*">
              <div className="flex items-center gap-[5px] pr-[74px]">
                <input
                  id="incident-location"
                  defaultValue="250 SWIFT ST ALBURY NSW 2640"
                  className={FIELD + " min-w-0 flex-1 bg-white"}
                />
                <button type="button" className="h-8 w-[83px] rounded-[3px] border border-[#767676] bg-[#efefef] text-[17px] whitespace-nowrap text-black">
                  Zoom to
                </button>
              </div>
              <p className="mt-[7px] h-[47px] w-[597px] max-w-full rounded-[4px] border border-[#d0e9c6] bg-[#dff0d8] px-[17px] text-[17px] leading-[45px] text-[#468847] [text-shadow:0_1px_0_rgba(255,255,255,0.5)]">
                Location Set: 250 SWIFT ST ALBURY NSW 2640 (146.916, -36.073)
              </p>
            </Row>
          </div>
          <div className="relative mt-[50px]">
            <MapNorth />
            <div className="absolute top-3 left-[13px] flex w-10 flex-col overflow-hidden rounded-[5px] border-2 border-black/20 bg-white text-black">
              <button type="button" aria-label="Zoom in" className="flex h-[38px] items-center justify-center border-b border-[#ccc]">
                <svg viewBox="0 0 16 16" className="h-4 w-4" aria-hidden="true"><path d="M0 8h16M8 0v16" stroke="currentColor" strokeWidth="2" /></svg>
              </button>
              <button type="button" aria-label="Zoom out" className="flex h-[38px] items-center justify-center">
                <svg viewBox="0 0 16 16" className="h-4 w-4" aria-hidden="true"><path d="M0 8h16" stroke="currentColor" strokeWidth="2" /></svg>
              </button>
            </div>
          </div>
        </div>
      </section>

      <section>
        <Header />
        <div className="pl-[319px]">
          <div className="relative">
            <MapSouth />
            <a href="#leaflet" className="absolute right-0 bottom-0 h-[21px] w-[19px] overflow-hidden bg-white/70 pl-[6px] text-[14px] leading-[20px] text-[#0078a8]">
              Le
            </a>
          </div>
          <div className="mt-[50px]">
            <TextField id="npws-branch" label="NPWS Branch" value="Southern Ranges" disabled />
            <TextField id="npws-area" label="NPWS Area" value="Riverina-Highlands" disabled />
            <TextField id="npws-reserve" label="NPWS Reserve" value="" disabled />
            <TextField id="state-forest" label="FCNSW State Forest" value="" disabled />
            <TextField id="fpa" label="FCNSW FPA" value="Tumbarumba" disabled />
          </div>
          <div className="mt-[38px]">
            <Heading>Incident Information</Heading>
            <div className="h-[180px] overflow-hidden">
              <SwitchField id="sensitive" label="Sensitive Address Information" on />
              <SwitchField id="master" label="Is Master Incident?" on={false} />
              <TextField id="incident-number" label="Incident Number - Local" value="221" />
            </div>
          </div>
        </div>
      </section>

      <section>
        <Header />
        <div className="pl-[319px]">
          <div className="mb-[25px] flex h-[23px] w-[200px] items-end justify-end overflow-hidden pr-[7px] text-[17px] leading-[25px]">
            <span className="pb-[6px]">Incident</span>
          </div>
          <div>
            <TextField id="ref-no" label="000 Reference No" value="000-2728495" />
            <TextField id="no-ref-reason" label="If no 000 reference no. is available, enter reason why" value="N/A" disabled />
            <DateField id="call-received" label="000 Call Received Date Time" value="11/03/2024 09:59" />
            <DateField id="agency-received" label="Agency Received Date Time*" value="11/03/2024 10:19" />
          </div>
          <h3 className="mt-[26px] mb-[26px] border-b border-[#e5e5e5] text-[26px] leading-[50px]">What type of incident is it*</h3>
          <Row id="bushfire-type" label="Bushfire Type">
            <input
              id="bushfire-type"
              className="block h-[53px] w-full rounded-l-[4px] border border-r-0 border-[#ccc] px-2 text-[17px] shadow-[inset_0_1px_1px_rgba(0,0,0,0.075)]"
            />
          </Row>
          <div className="mt-[57px]">
            <SelectField id="other-fire" label="Other Fire Incident" value="Car fire" />
            <SelectField id="non-fire" label="Non-fire Incident" value="" />
          </div>
          <p className="mt-[25px] text-[17px] leading-[25px]">Select bushfire type, other fire type or non-fire type</p>
          <div className="mt-[26px] h-[87px] border-t border-[#e5e5e5] bg-[#f0efed]" />
          <footer className="mt-[112px] flex items-start border-t border-[#eee] pt-7 pl-[6px] text-[14px] leading-[20px]">
            <span>Version: <b>4.21.1.106 (2024-03-04 05:12 UTC)</b></span>
            <span className="ml-4">Server time: <b>11/03/2024 10:30 AM</b></span>
            <span className="ml-auto">Copyright ©</span>
          </footer>
        </div>
      </section>
    </div>
  );
}
